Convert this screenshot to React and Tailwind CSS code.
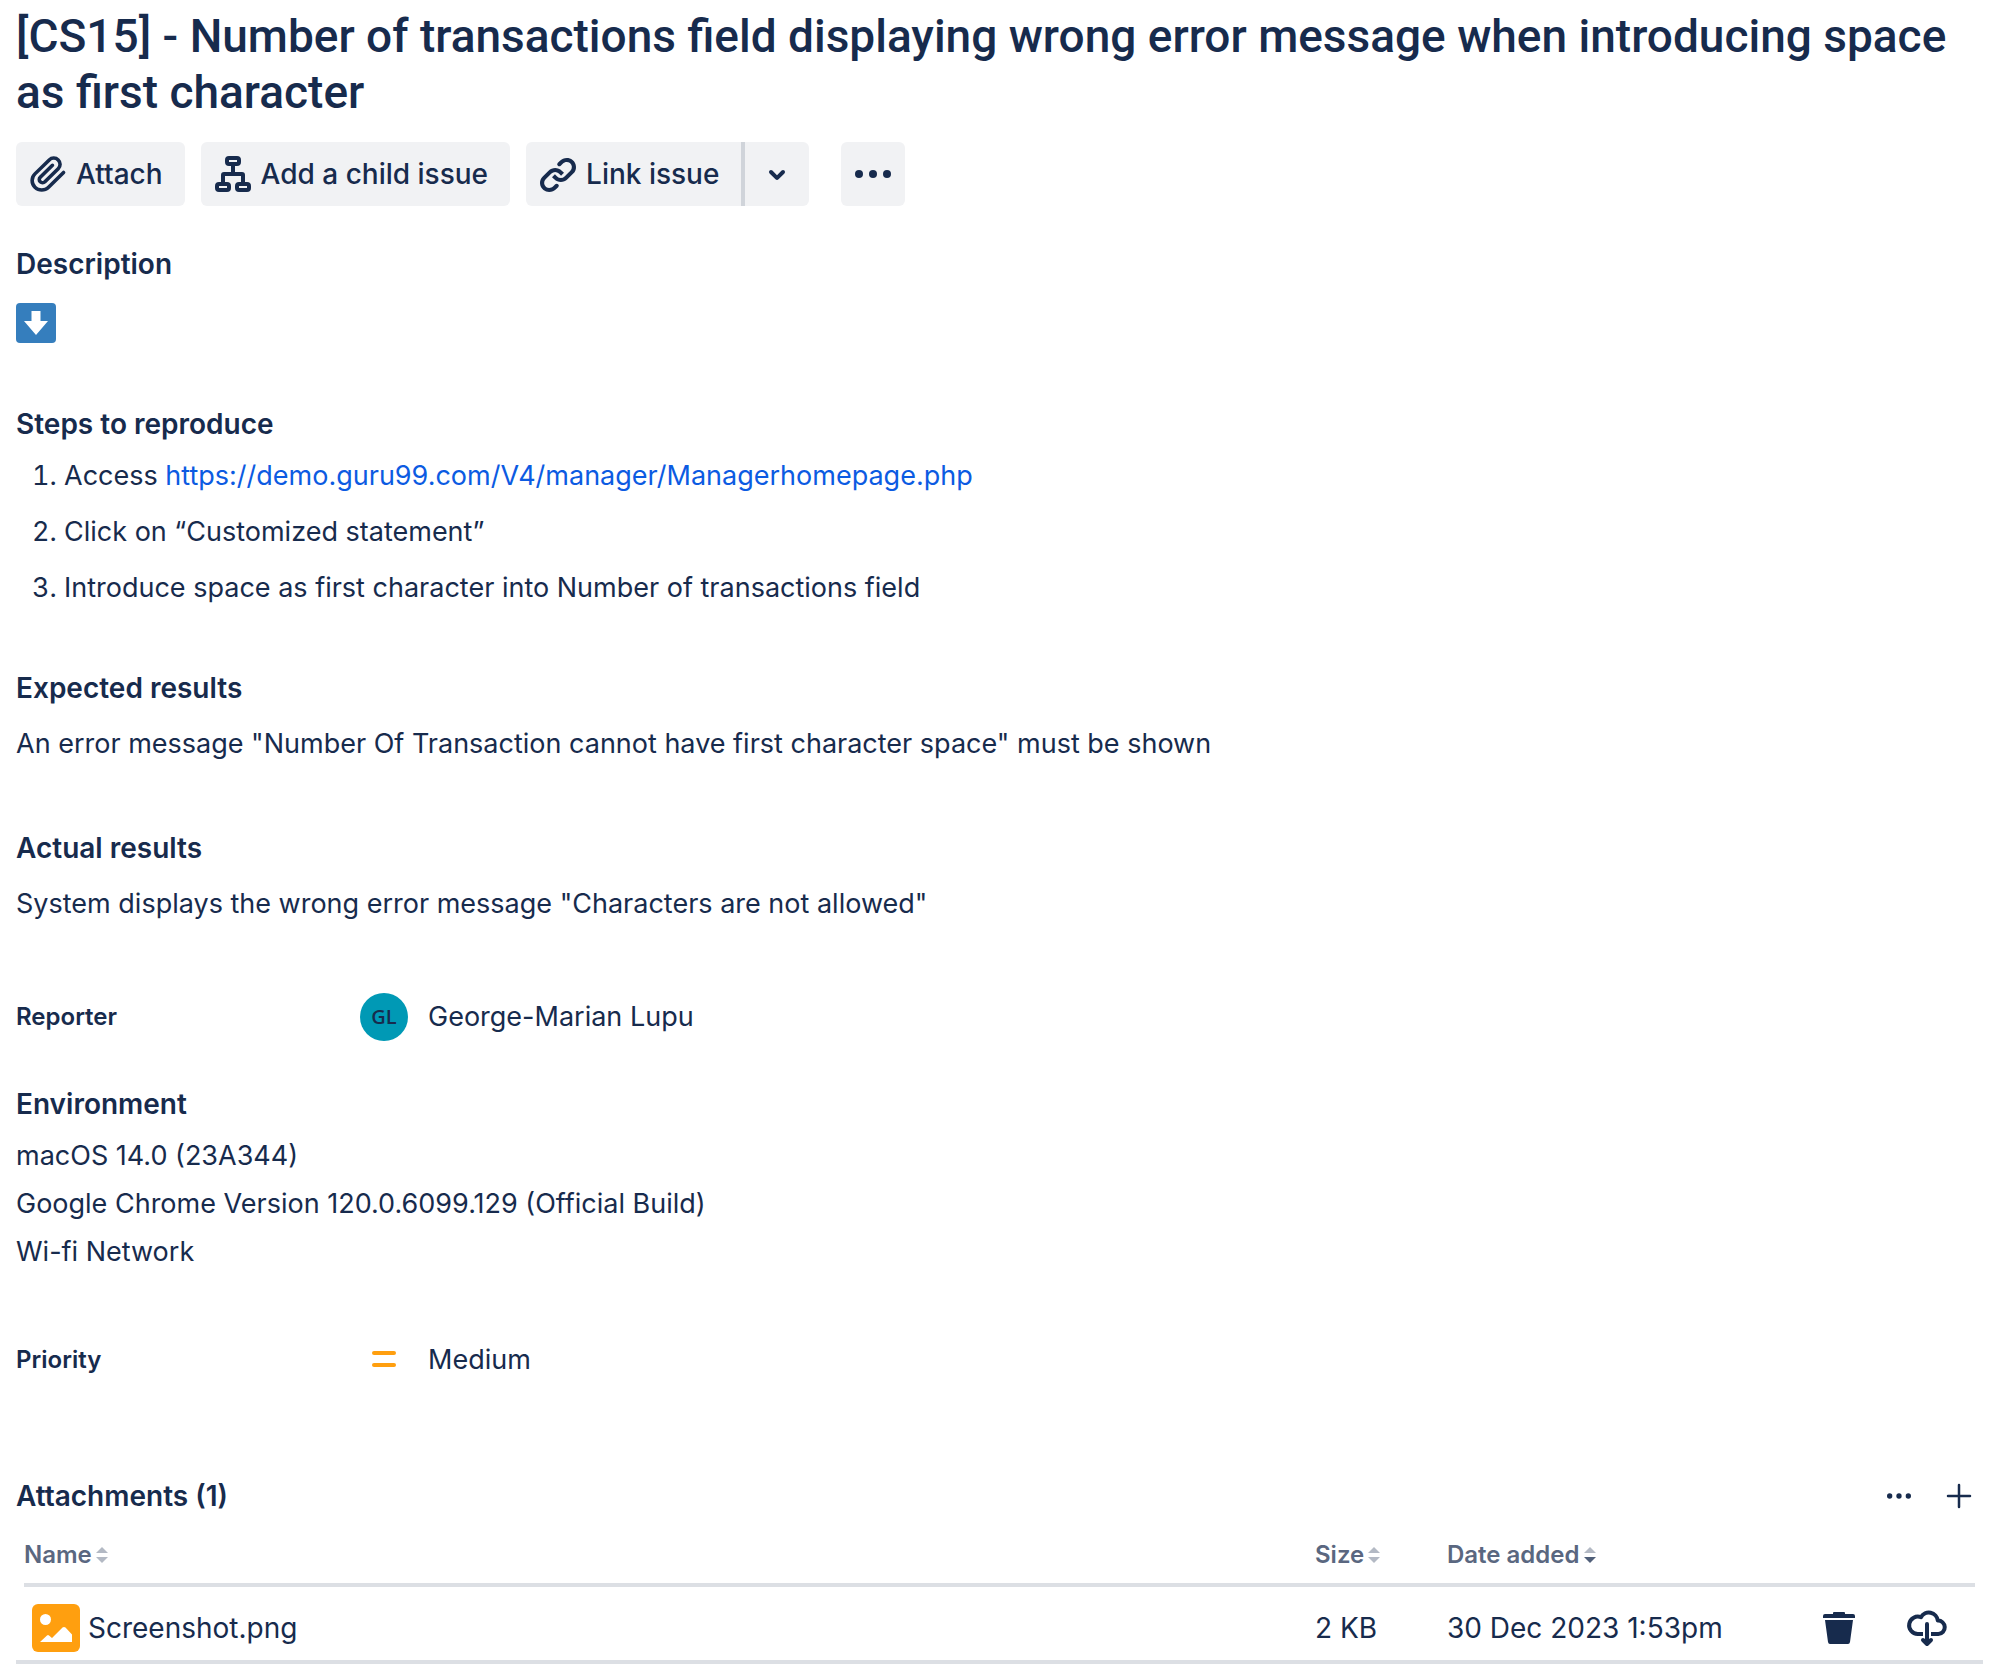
const H = 'text-[28px] leading-10 font-semibold';

function Icon({ children, className = 'size-12' }) {
  return (
    <svg viewBox="0 0 48 48" className={`shrink-0 ${className}`} fill="currentColor" aria-hidden="true">
      {children}
    </svg>
  );
}

function AttachIcon() {
  return (
    <Icon>
      <path
        transform="scale(2)"
        d="M11.643 17.965c-1.53 1.495-4.016 1.496-5.542.004a3.773 3.773 0 01.002-5.412l7.147-6.985a2.316 2.316 0 013.22.004 2.234 2.234 0 01-.004 3.195l-6.645 6.494a.76.76 0 01-1.065-.004.716.716 0 01.002-1.03l6.108-5.97a.868.868 0 000-1.242.912.912 0 00-1.27 0l-6.108 5.97a2.45 2.45 0 00-.002 3.515 2.584 2.584 0 003.608.004l6.645-6.494a3.966 3.966 0 00.004-5.679 4.13 4.13 0 00-5.761-.004l-7.147 6.985a5.506 5.506 0 00-.002 7.896c2.227 2.177 5.835 2.177 8.08-.016l7.505-7.334a.868.868 0 000-1.242.912.912 0 00-1.27 0l-7.506 7.345z"
      />
    </Icon>
  );
}

function ChildIssuesIcon() {
  return (
    <Icon>
      <g fill="none" stroke="currentColor" strokeWidth="4">
        <rect x="18" y="8" width="12" height="6" rx="2" />
        <rect x="8" y="34" width="12" height="6" rx="2" />
        <rect x="28" y="34" width="12" height="6" rx="2" />
        <path d="M24 15v9M14 33v-8q0-1 1-1h18q1 0 1 1v8" />
      </g>
    </Icon>
  );
}

function LinkIcon() {
  return (
    <Icon>
      <g transform="scale(2)">
        <path d="M12.856 5.457l-.937.92a1.002 1.002 0 000 1.437 1.047 1.047 0 001.463 0l.984-.966c.967-.95 2.542-1.135 3.602-.288a2.54 2.54 0 01.203 3.81l-2.903 2.852a2.646 2.646 0 01-3.696 0l-1.11-1.09L9 13.57l1.108 1.089c1.822 1.788 4.802 1.788 6.622 0l2.905-2.852a4.558 4.558 0 00-.357-6.82c-1.893-1.517-4.695-1.226-6.422.47" />
        <path d="M11.144 19.543l.937-.92a1.002 1.002 0 000-1.437 1.047 1.047 0 00-1.462 0l-.985.966c-.967.95-2.542 1.135-3.602.288a2.54 2.54 0 01-.203-3.81l2.903-2.852a2.646 2.646 0 013.696 0l1.11 1.09L15 11.43l-1.108-1.089c-1.822-1.788-4.802-1.788-6.622 0l-2.905 2.852a4.558 4.558 0 00.357 6.82c1.893 1.517 4.695 1.226 6.422-.47" />
      </g>
    </Icon>
  );
}

function ChevronIcon() {
  return (
    <Icon>
      <path
        transform="scale(2)"
        d="M8.292 10.293a1.009 1.009 0 000 1.419l2.939 2.965c.218.215.5.322.779.322s.556-.107.769-.322l2.93-2.955a1.01 1.01 0 000-1.419.987.987 0 00-1.406 0l-2.298 2.317-2.307-2.327a.99.99 0 00-1.406 0z"
      />
    </Icon>
  );
}

function MoreIcon({ className }) {
  return (
    <Icon className={className}>
      <circle cx="10" cy="24" r="4" />
      <circle cx="24" cy="24" r="4" />
      <circle cx="38" cy="24" r="4" />
    </Icon>
  );
}

function SortIcon({ active }) {
  return (
    <svg viewBox="0 0 12 16" className="h-4 w-3 shrink-0" aria-hidden="true">
      <path d="M6 0l6 6H0z" fill="#b3b9c4" />
      <path d="M0 10h12l-6 6z" fill={active ? '#505f79' : '#b3b9c4'} />
    </svg>
  );
}

function SortHeader({ children, active, className }) {
  return (
    <th scope="col" className={`p-0 text-left font-semibold ${className}`}>
      <button type="button" className="flex h-14 items-center gap-1 whitespace-nowrap">
        {children}
        <SortIcon active={active} />
      </button>
    </th>
  );
}

function Field({ label, icon, value }) {
  return (
    <div className="flex h-12 items-center">
      <dt className="w-[344px] text-[24px] leading-8 font-semibold">{label}</dt>
      <dd className="flex items-center gap-5">
        {icon}
        {value}
      </dd>
    </div>
  );
}

export default function App() {
  return (
    <main className="bg-white pt-2 pr-[19px] pb-[10px] pl-4 font-[Inter,'Liberation_Sans',sans-serif] text-[27px] leading-10 text-[#172b4d]">
      <h1 className="font-[Roboto,Inter,sans-serif] text-[46px] leading-14 font-medium">
        [CS15] - Number of transactions field displaying wrong error message when introducing space as first character
      </h1>

      <div className="mt-[22px] flex items-start gap-4 text-[28px] font-medium">
        <button type="button" className="flex h-16 items-center gap-1 rounded-md bg-[#f1f2f4] pr-[22px] pl-2">
          <AttachIcon />
          Attach
        </button>
        <button type="button" className="flex h-16 items-center gap-1 rounded-md bg-[#f1f2f4] pr-[22px] pl-2">
          <ChildIssuesIcon />
          Add a child issue
        </button>
        <div className="flex">
          <button type="button" className="flex h-16 items-center gap-1 rounded-l-md bg-[#f1f2f4] pr-[22px] pl-2">
            <LinkIcon />
            Link issue
          </button>
          <button
            type="button"
            aria-label="More link options"
            className="flex h-16 items-center rounded-r-md border-l-4 border-[#d0d4da] bg-[#f1f2f4] px-2"
          >
            <ChevronIcon />
          </button>
        </div>
        <button type="button" aria-label="Actions" className="ml-4 flex h-16 items-center rounded-md bg-[#f1f2f4] px-2">
          <MoreIcon className="size-12" />
        </button>
      </div>

      <section className="mt-[38px]">
        <h2 className={H}>Description</h2>
        <svg viewBox="0 0 40 40" className="mt-[19px] size-10" role="img" aria-label="Down arrow">
          <rect width="40" height="40" rx="4" fill="#357ebd" />
          <path d="M15.500 8h9v10h7.500L20 32 8 18h7.500z" fill="#fff" />
        </svg>
      </section>

      <section className="mt-[61px]">
        <h2 className={H}>Steps to reproduce</h2>
        <ol className="mt-3 ml-12 flex list-decimal flex-col gap-4">
          <li>
            Access{' '}
            <a href="https://demo.guru99.com/V4/manager/Managerhomepage.php" className="text-[#0c5be2]">
              https://demo.guru99.com/V4/manager/Managerhomepage.php
            </a>
          </li>
          <li>Click on “Customized statement”</li>
          <li>Introduce space as first character into Number of transactions field</li>
        </ol>
      </section>

      <section className="mt-15">
        <h2 className={H}>Expected results</h2>
        <p className="mt-4">An error message "Number Of Transaction cannot have first character space" must be shown</p>
      </section>

      <section className="mt-16">
        <h2 className={H}>Actual results</h2>
        <p className="mt-4">System displays the wrong error message "Characters are not allowed"</p>
      </section>

      <dl className="mt-[69px]">
        <Field
          label="Reporter"
          icon={
            <span className="flex size-12 items-center justify-center rounded-full bg-[#0099b5] font-['Open_Sans',sans-serif] text-[20px] leading-6 font-semibold">
              GL
            </span>
          }
          value="George-Marian Lupu"
        />
      </dl>

      <section className="mt-[43px]">
        <h2 className={H}>Environment</h2>
        <p className="mt-2 leading-12">
          macOS 14.0 (23A344)
          <br />
          Google Chrome Version 120.0.6099.129 (Official Build)
          <br />
          Wi-fi Network
        </p>
      </section>

      <dl className="mt-15">
        <Field
          label="Priority"
          icon={
            <Icon>
              <rect x="12" y="15" width="24" height="4" rx="2" fill="#ff9f0f" />
              <rect x="12" y="27" width="24" height="4" rx="2" fill="#ff9f0f" />
            </Icon>
          }
          value="Medium"
        />
      </dl>

      <section className="mt-[92px]">
        <div className="flex items-center justify-between">
          <h2 className={H}>Attachments (1)</h2>
          <div className="flex items-center gap-7 pr-2">
            <button type="button" aria-label="Attachment actions">
              <MoreIcon className="size-8" />
            </button>
            <button type="button" aria-label="Add attachment">
              <svg viewBox="0 0 32 32" className="size-8" fill="none" stroke="currentColor" strokeWidth="2.500" strokeLinecap="round">
                <path d="M16 5v22M5 16h22" />
              </svg>
            </button>
          </div>
        </div>
        <div className="mt-[11px] border-b-4 border-[#dcdfe4] px-2">
          <table className="w-full table-fixed border-collapse text-[28px]">
            <thead className="border-b-4 border-[#dcdfe4] text-[24px] leading-8 text-[#5a6780]">
              <tr>
                <SortHeader>Name</SortHeader>
                <SortHeader className="w-[132px]">Size</SortHeader>
                <SortHeader active className="w-[368px]">
                  Date added
                </SortHeader>
                <th scope="col" aria-label="Actions" className="w-40 p-0" />
              </tr>
            </thead>
            <tbody>
              <tr className="h-[75px]">
                <td className="p-0 pt-4 pb-2">
                  <div className="flex items-center gap-2 pl-2">
                    <svg viewBox="0 0 48 48" className="size-12" aria-hidden="true">
                      <rect width="48" height="48" rx="6" fill="#ff9f0f" />
                      <circle cx="13.500" cy="15.500" r="5.500" fill="#fff" />
                      <path d="M8 38l7-6.500q1-1 2 0l3 2.500 10.500-10.500q1.500-1 3 0l6.500 7v7.500z" fill="#fff" />
                    </svg>
                    Screenshot.png
                  </div>
                </td>
                <td className="p-0 pt-4 pb-2 whitespace-nowrap">2 KB</td>
                <td className="p-0 pt-4 pb-2 whitespace-nowrap">30 Dec 2023 1:53pm</td>
                <td className="p-0 pt-4 pb-2">
                  <div className="flex gap-10">
                    <button type="button" aria-label="Delete attachment">
                      <Icon>
                        <path d="M18 9q0-1 1-1h10q1 0 1 1v1h8q2 0 2 2v2H8v-2q0-2 2-2h8zM10 16h28l-3 22q-.3 2-2 2H15q-1.700 0-2-2z" />
                      </Icon>
                    </button>
                    <button type="button" aria-label="Download attachment">
                      <Icon>
                        <g fill="none" stroke="currentColor" strokeWidth="4" strokeLinejoin="round">
                          <path d="M20 30h-5.300a8.700 8.700 0 1 1 3.300-16.800A9 9 0 0 1 34.800 16.600A6.700 6.700 0 0 1 35.300 30H28" />
                          <path d="M24 20v19M20 36l4 4 4-4" strokeLinecap="round" />
                        </g>
                      </Icon>
                    </button>
                  </div>
                </td>
              </tr>
            </tbody>
          </table>
        </div>
      </section>
    </main>
  );
}
